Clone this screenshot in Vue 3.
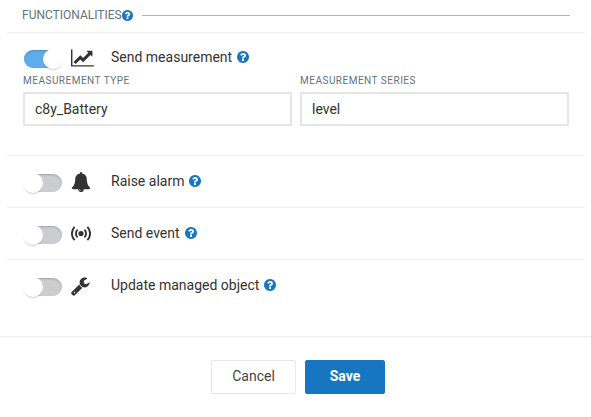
<script setup>
import { ref } from 'vue'

const icons = {
  chart: {
    width: 2048,
    path: 'M2048 0v-128h-2048v1536h128v-1408h1920zM1920 1248v-435q0-21-19.5-29.5t-35.5 7.5l-121 121l-633-633q-10-10-23-10t-23 10l-233 233l-416-416l-192 192l585 585q10 10 23 10t23-10l233-233l464 464l-121 121q-16 16-7.5 35.5t29.5 19.5h435q14 0 23-9t9-23z',
  },
  bell: {
    width: 1792,
    path: 'M912 -160q0 16-16 16q-59 0-101.5 42.5t-42.5 101.5q0 16-16 16t-16-16q0-73 51.5-124.5t124.5-51.5q16 0 16 16zM1728 128q0-52-38-90t-90-38h-448q0-106-75-181t-181-75t-181 75t-75 181h-448q-52 0-90 38t-38 90q50 42 91 88t85 119.5t74.5 158.5t50 206t19.5 260q0 152 117 282.5t307 158.5q-8 19-8 39q0 40 28 68t68 28t68-28t28-68q0-20-8-39q190-28 307-158.5t117-282.5q0-139 19.5-260t50-206t74.5-158.5t85-119.5t91-88z',
  },
  wrench: {
    width: 1664,
    path: 'M384 64q0 26-19 45t-45 19t-45-19t-19-45t19-45t45-19t45 19t19 45zM1028 484l-682-682q-37-37-90-37q-52 0-91 37l-106 108q-38 36-38 90q0 53 38 91l681 681q39-98 114.5-173.5t173.5-114.5zM1662 919q0-39-23-106q-47-134-164.5-217.5t-258.5-83.5q-185 0-316.5 131.5t-131.5 316.5t131.5 316.5t316.5 131.5q58 0 121.5-16.5t107.5-46.5q16-11 16-28t-16-28l-293-169v-224l193-107q5 3 79 48.5t135.5 81t70.5 35.5q15 0 23.5-10t8.5-25z',
  },
}

const helpPath =
  'M896 160v192q0 14-9 23t-23 9h-192q-14 0-23-9t-9-23v-192q0-14 9-23t23-9h192q14 0 23 9t9 23zM1152 832q0 88-55.5 163t-138.5 116t-170 41q-243 0-371-213q-15-24 8-42l132-100q7-6 19-6q16 0 25 12q53 68 86 92q34 24 86 24q48 0 85.5-26t37.5-59q0-38-20-61t-68-45q-63-28-115.5-86.5t-52.5-125.5v-36q0-14 9-23t23-9h192q14 0 23 9t9 23q0 19 21.5 49.5t54.5 49.5q32 18 49 28.5t46 35t44.5 48t28 60.5t12.5 81zM1536 640q0-209-103-385.5t-279.5-279.5t-385.5-103t-385.5 103t-279.5 279.5t-103 385.5t103 385.5t279.5 279.5t385.5 103t385.5-103t279.5-279.5t103-385.5z'

const rows = ref([
  {
    label: 'Send measurement',
    icon: 'chart',
    on: true,
    fields: [
      { label: 'Measurement type', value: 'c8y_Battery' },
      { label: 'Measurement series', value: 'level' },
    ],
  },
  { label: 'Raise alarm', icon: 'bell', on: false },
  { label: 'Send event', icon: 'signal', on: false },
  { label: 'Update managed object', icon: 'wrench', on: false },
])
</script>

<template>
  <div class="dialog">
    <div class="panel">
      <div class="legend">
        <span class="legend-text">Functionalities</span>
        <svg class="help small" viewBox="0 -1408 1536 1536"><path transform="scale(1 -1)" :d="helpPath" /></svg>
        <span class="rule"></span>
      </div>
      <div v-for="row in rows" :key="row.label" class="row" :class="{ expanded: row.fields }">
        <div class="head">
          <button class="toggle" :class="{ on: row.on }" @click="row.on = !row.on"><span class="knob"></span></button>
          <span class="icon">
            <svg v-if="row.icon === 'signal'" class="signal" viewBox="0 0 20 16">
              <circle cx="10" cy="7.5" r="2.6" />
              <path class="wave" d="M6.6 3.6a5.4 5.4 0 0 0 0 7.8M13.4 3.6a5.4 5.4 0 0 1 0 7.8M3.6 0.8a9.7 9.7 0 0 0 0 13.4M16.4 0.8a9.7 9.7 0 0 1 0 13.4" />
            </svg>
            <svg v-else class="glyph" :viewBox="`0 -1536 ${icons[row.icon].width} 1792`">
              <path transform="scale(1 -1)" :d="icons[row.icon].path" />
            </svg>
          </span>
          <span class="label">{{ row.label }}</span>
          <svg class="help" viewBox="0 -1408 1536 1536"><path transform="scale(1 -1)" :d="helpPath" /></svg>
        </div>
        <div v-if="row.fields" class="fields">
          <label v-for="field in row.fields" :key="field.label" class="field">
            <span class="caption">{{ field.label }}</span>
            <input v-model="field.value" type="text" />
          </label>
        </div>
      </div>
    </div>
    <div class="footer">
      <button class="btn cancel">Cancel</button>
      <button class="btn save">Save</button>
    </div>
  </div>
</template>

<style>
body {
  margin: 0;
  background: #fff;
}
</style>

<style scoped>
.dialog {
  box-sizing: border-box;
  height: 417px;
  overflow: hidden;
  font-family: Roboto, sans-serif;
  font-size: 14px;
  color: #333;
}
.dialog * {
  box-sizing: border-box;
}
.panel {
  height: 336px;
  padding: 0 6px 0 7px;
}
.legend {
  display: flex;
  align-items: center;
  height: 33px;
  padding: 0 15px 3px;
  border-bottom: 1px solid #f0f0f0;
}
.legend-text {
  width: 100px;
  font-size: 12px;
  line-height: 16px;
  text-transform: uppercase;
  white-space: nowrap;
  color: #5f7480;
}
.rule {
  flex: 1;
  height: 1px;
  margin: 2px 0 0 9px;
  background: #adb5b9;
}
.help {
  display: block;
  width: 12px;
  height: 12px;
  margin: 0 0 2px 5px;
  fill: #1776bf;
}
.help.small {
  width: 11px;
  height: 11px;
  margin: 2px 0 0;
}
.row {
  height: 52px;
  padding: 15px 16px 0;
  border-bottom: 1px solid #f0f0f0;
}
.row:last-child {
  border-bottom: 0;
}
.row.expanded {
  height: 123px;
}
.head {
  display: flex;
  align-items: center;
  height: 22px;
}
.expanded .head {
  height: 20px;
}
.toggle {
  display: flex;
  align-items: center;
  width: 38px;
  height: 18px;
  margin: 2px 9px 0 1px;
  padding: 0;
  border: 0;
  border-radius: 9px;
  background: #caced1;
  box-shadow: inset 0 1px 2px rgba(0, 0, 0, 0.2);
}
.toggle.on {
  justify-content: flex-end;
  background: #5eacea;
}
.knob {
  width: 20px;
  height: 20px;
  margin: 0 -1px;
  border-radius: 50%;
  background: #fff;
  box-shadow: 0 2px 2px -1px rgba(0, 0, 0, 0.2);
}
.icon {
  width: 40px;
  height: 20px;
}
.glyph {
  display: block;
  height: 20px;
  fill: #333;
}
.signal {
  display: block;
  width: 20px;
  height: 16px;
  margin-top: 2px;
  fill: #333;
}
.wave {
  fill: none;
  stroke: #333;
  stroke-width: 1.9;
}
.label {
  margin-bottom: 2px;
  line-height: 20px;
  white-space: nowrap;
}
.fields {
  display: grid;
  grid-template-columns: 269px 269px;
  gap: 8px;
  padding-top: 7px;
}
.field {
  display: block;
}
.caption {
  display: block;
  height: 17px;
  font-size: 10px;
  line-height: 12px;
  letter-spacing: 0.5px;
  text-transform: uppercase;
  color: #5f7480;
}
.field input {
  display: block;
  width: 100%;
  height: 34px;
  padding: 0 10px;
  border: 2px solid #e5e5e5;
  border-radius: 0;
  outline: none;
  background: #fff;
  font: inherit;
  color: #333;
}
.footer {
  display: flex;
  justify-content: center;
  gap: 9px;
  height: 81px;
  padding: 23px 0 0 5px;
  border-top: 1px solid #f0f0f0;
}
.btn {
  height: 34px;
  padding: 0 0 2px;
  border: 1px solid #e8e8e8;
  border-radius: 2px;
  background: #fff;
  font: inherit;
  color: #444;
}
.cancel {
  width: 85px;
}
.save {
  width: 80px;
  border-color: #1776bf;
  background: #1776bf;
  font-weight: 700;
  color: #fff;
}
</style>
